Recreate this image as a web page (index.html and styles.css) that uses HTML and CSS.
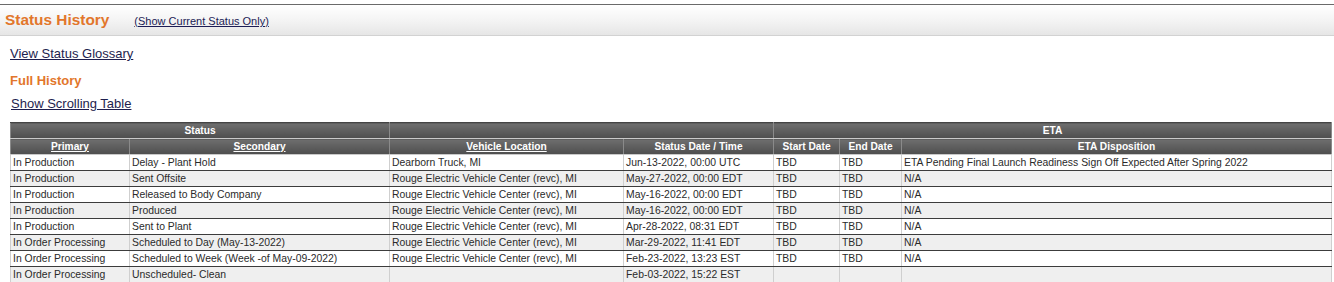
FILE: index.html
```html
<!DOCTYPE html>
<html>
<head>
<meta charset="utf-8">
<link rel="stylesheet" href="styles.css">
</head>
<body>
<div class="page">
  <div class="titlebar">
    <span class="title">Status History</span>
    <a class="small-link" href="#">(Show Current Status Only)</a>
  </div>
  <div class="content">
    <a class="link glossary" href="#">View Status Glossary</a>
    <div class="subtitle">Full History</div>
    <a class="link scrolling" href="#">Show Scrolling Table</a>
    <table class="history">
      <colgroup>
        <col class="c1"><col class="c2"><col class="c3"><col class="c4"><col class="c5"><col class="c6"><col class="c7">
      </colgroup>
      <thead>
        <tr class="h1">
          <th colspan="2">Status</th>
          <th colspan="2"></th>
          <th colspan="3">ETA</th>
        </tr>
        <tr class="h2">
          <th><u>Primary</u></th>
          <th><u>Secondary</u></th>
          <th><u>Vehicle Location</u></th>
          <th>Status Date / Time</th>
          <th>Start Date</th>
          <th>End Date</th>
          <th>ETA Disposition</th>
        </tr>
      </thead>
      <tbody>
        <tr><td>In Production</td><td>Delay - Plant Hold</td><td>Dearborn Truck, MI</td><td>Jun-13-2022, 00:00 UTC</td><td>TBD</td><td>TBD</td><td>ETA Pending Final Launch Readiness Sign Off Expected After Spring 2022</td></tr>
        <tr><td>In Production</td><td>Sent Offsite</td><td>Rouge Electric Vehicle Center (revc), MI</td><td>May-27-2022, 00:00 EDT</td><td>TBD</td><td>TBD</td><td>N/A</td></tr>
        <tr><td>In Production</td><td>Released to Body Company</td><td>Rouge Electric Vehicle Center (revc), MI</td><td>May-16-2022, 00:00 EDT</td><td>TBD</td><td>TBD</td><td>N/A</td></tr>
        <tr><td>In Production</td><td>Produced</td><td>Rouge Electric Vehicle Center (revc), MI</td><td>May-16-2022, 00:00 EDT</td><td>TBD</td><td>TBD</td><td>N/A</td></tr>
        <tr><td>In Production</td><td>Sent to Plant</td><td>Rouge Electric Vehicle Center (revc), MI</td><td>Apr-28-2022, 08:31 EDT</td><td>TBD</td><td>TBD</td><td>N/A</td></tr>
        <tr><td>In Order Processing</td><td>Scheduled to Day (May-13-2022)</td><td>Rouge Electric Vehicle Center (revc), MI</td><td>Mar-29-2022, 11:41 EDT</td><td>TBD</td><td>TBD</td><td>N/A</td></tr>
        <tr><td>In Order Processing</td><td>Scheduled to Week (Week -of May-09-2022)</td><td>Rouge Electric Vehicle Center (revc), MI</td><td>Feb-23-2022, 13:23 EST</td><td>TBD</td><td>TBD</td><td>N/A</td></tr>
        <tr><td>In Order Processing</td><td>Unscheduled- Clean</td><td></td><td>Feb-03-2022, 15:22 EST</td><td></td><td></td><td></td></tr>
      </tbody>
    </table>
  </div>
</div>
</body>
</html>
```

FILE: styles.css
```css
html, body {
  margin: 0;
  padding: 0;
  background: #ffffff;
  font-family: "Liberation Sans", Arial, sans-serif;
}

.page {
  padding-top: 4px;
}

.titlebar {
  height: 30px;
  border-top: 1px solid #6a6a6a;
  border-bottom: 1px solid #d2d2d2;
  background: linear-gradient(#ffffff 0%, #f4f4f4 50%, #e6e6e6 100%);
  display: flex;
  align-items: center;
  padding-left: 5px;
  box-sizing: content-box;
}

.title {
  color: #e2762b;
  font-weight: bold;
  font-size: 15.4px;
  margin-top: -1px;
}

.small-link {
  color: #1c1c55;
  font-size: 11px;
  margin-left: 25px;
  margin-top: 2px;
  text-decoration: underline;
}

.content {
  padding: 0 2px 0 10px;
}

.link {
  display: block;
  color: #1e1e4e;
  font-size: 13px;
  text-decoration: underline;
  line-height: 16px;
}

.glossary {
  margin-top: 10px;
}

.subtitle {
  color: #e2762b;
  font-weight: bold;
  font-size: 13px;
  line-height: 16px;
  margin-top: 11px;
}

.scrolling {
  margin-top: 7px;
  margin-left: 1px;
}

.history {
  margin-top: 10px;
  width: 1322px;
  border-collapse: collapse;
  table-layout: fixed;
  font-size: 10.4px;
  border: 1px solid #444;
}

.c1 { width: 119px; }
.c2 { width: 260px; }
.c3 { width: 234px; }
.c4 { width: 150px; }
.c5 { width: 66px; }
.c6 { width: 62px; }
.c7 { width: auto; }

.history th {
  background: linear-gradient(#6e6e6e, #4e4e4e);
  color: #ffffff;
  font-weight: bold;
  font-size: 10.2px;
  height: 15px;
  padding: 0 2px;
  border: 1px solid #8a8a8a;
  border-top-color: #444;
  border-bottom-color: #c9c9c9;
  line-height: 14px;
  white-space: nowrap;
}

.history th u {
  text-decoration: underline;
}

.history td {
  height: 15px;
  padding: 0 2px;
  line-height: 14px;
  color: #2a2a2a;
  border-left: 1px solid #cfcfcf;
  border-right: 1px solid #cfcfcf;
  border-bottom: 1px solid #3c3c3c;
  white-space: nowrap;
  overflow: hidden;
}

.history tbody tr:nth-child(odd) td {
  background: #ffffff;
}

.history tbody tr:nth-child(even) td {
  background: #efefef;
}
```
